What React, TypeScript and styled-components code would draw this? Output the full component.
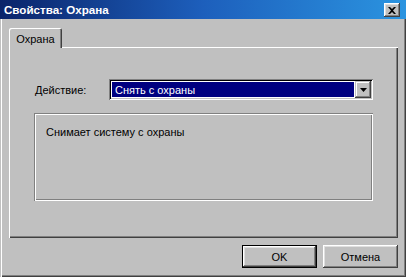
import React from 'react';
import styled, { createGlobalStyle } from 'styled-components';

const Face = '#c0c0c0';
const Shadow = '#808080';
const DarkShadow = '#404040';
const Highlight = '#ffffff';
const Light = '#dfdfdf';

const GlobalStyle = createGlobalStyle`
  html, body {
    margin: 0;
    padding: 0;
    background: ${Face};
  }
  body {
    font-family: 'Liberation Sans', Arial, sans-serif;
    font-size: 11px;
    color: #000;
  }
`;

const Window = styled.div`
  width: 406px;
  height: 277px;
  display: flex;
  flex-direction: column;
  background: ${Face};
  overflow: hidden;
`;

const TitleBar = styled.div`
  height: 19px;
  flex: none;
  display: flex;
  align-items: center;
  justify-content: space-between;
  padding: 0 6px 0 4px;
  background: linear-gradient(to right, #0a246a 0%, #1d5fbc 50%, #2b94e0 100%);
`;

const Title = styled.span`
  color: #fff;
  font-weight: bold;
  font-size: 11.6px;
`;

const CloseButton = styled.div`
  width: 16px;
  height: 14px;
  margin-top: 1px;
  display: flex;
  align-items: center;
  justify-content: center;
  background: ${Face};
  box-shadow: inset -1px -1px ${DarkShadow}, inset 1px 1px ${Highlight},
    inset -2px -2px ${Shadow}, inset 2px 2px ${Light};
`;

const Body = styled.div`
  flex: 1;
  display: flex;
  flex-direction: column;
  padding: 9px 8px 9px 9px;
  box-shadow: inset 1px 0 ${Face}, inset 2px 0 ${Highlight},
    inset -1px -1px ${DarkShadow}, inset -2px -2px ${Shadow};
`;

const TabStrip = styled.div`
  display: flex;
  height: 19px;
  position: relative;
  z-index: 1;
`;

const Tab = styled.div<{ active?: boolean }>`
  width: 53px;
  height: ${({ active }) => (active ? 20 : 18)}px;
  display: flex;
  align-items: center;
  justify-content: center;
  padding-top: 1px;
  box-sizing: border-box;
  background: ${Face};
  border-radius: 2px 2px 0 0;
  box-shadow: inset 1px 1px ${Highlight}, inset -1px 0 ${DarkShadow},
    inset -2px 0 ${Shadow};
`;

const TabPanel = styled.div`
  height: 191px;
  display: flex;
  flex-direction: column;
  padding: 32px 25px 0 25px;
  box-sizing: border-box;
  box-shadow: inset 1px 1px ${Highlight}, inset -1px -1px ${DarkShadow},
    inset -2px -2px ${Shadow};
`;

const FieldRow = styled.div`
  display: flex;
  align-items: center;
  height: 21px;
  padding-left: 1px;
`;

const Label = styled.span`
  width: 74px;
  flex: none;
`;

const Combo = styled.div`
  width: 264px;
  height: 21px;
  box-sizing: border-box;
  display: flex;
  padding: 2px;
  background: #fff;
  box-shadow: inset 1px 1px ${Shadow}, inset -1px -1px ${Highlight},
    inset 2px 2px #000, inset -2px -2px ${Face};
`;

const ComboValue = styled.div`
  flex: 1;
  display: flex;
  align-items: center;
  padding-left: 3px;
  margin: 1px;
  background: #000080;
  color: #fff;
`;

const ComboArrow = styled.div`
  width: 16px;
  flex: none;
  display: flex;
  align-items: center;
  justify-content: center;
  background: ${Face};
  box-shadow: inset -1px -1px ${DarkShadow}, inset 1px 1px ${Face},
    inset -2px -2px ${Shadow}, inset 2px 2px ${Highlight};
`;

const GroupBox = styled.div`
  margin-top: 13px;
  width: 339px;
  height: 88px;
  box-sizing: border-box;
  padding: 13px 12px;
  box-shadow: inset 1px 1px ${Shadow}, inset 2px 2px ${Highlight},
    inset -1px -1px ${Highlight}, inset -2px -2px ${Shadow};
`;

const ButtonRow = styled.div`
  margin-top: 7px;
  display: flex;
  justify-content: flex-end;
  gap: 6px;
`;

const Button = styled.div<{ primary?: boolean }>`
  width: 75px;
  height: 23px;
  box-sizing: border-box;
  display: flex;
  align-items: center;
  justify-content: center;
  background: ${Face};
  box-shadow: ${({ primary }) =>
    primary
      ? `inset 0 0 0 1px #000, inset -2px -2px ${DarkShadow}, inset 2px 2px ${Highlight}, inset -3px -3px ${Shadow}, inset 3px 3px ${Light}`
      : `inset -1px -1px ${DarkShadow}, inset 1px 1px ${Highlight}, inset -2px -2px ${Shadow}, inset 2px 2px ${Light}`};
`;

export default function App() {
  return (
    <>
      <GlobalStyle />
      <Window>
        <TitleBar>
          <Title>Свойства: Охрана</Title>
          <CloseButton>
            <svg width="8" height="7" viewBox="0 0 8 7">
              <path d="M0 0h2l2 2 2-2h2L5 3.5 8 7H6L4 5 2 7H0l3-3.5z" fill="#000" />
            </svg>
          </CloseButton>
        </TitleBar>
        <Body>
          <TabStrip>
            <Tab active>Охрана</Tab>
          </TabStrip>
          <TabPanel>
            <FieldRow>
              <Label>Действие:</Label>
              <Combo>
                <ComboValue>Снять с охраны</ComboValue>
                <ComboArrow>
                  <svg width="7" height="4" viewBox="0 0 7 4">
                    <path d="M0 0h7L3.5 4z" fill="#000" />
                  </svg>
                </ComboArrow>
              </Combo>
            </FieldRow>
            <GroupBox>Снимает систему с охраны</GroupBox>
          </TabPanel>
          <ButtonRow>
            <Button primary>OK</Button>
            <Button>Отмена</Button>
          </ButtonRow>
        </Body>
      </Window>
    </>
  );
}
